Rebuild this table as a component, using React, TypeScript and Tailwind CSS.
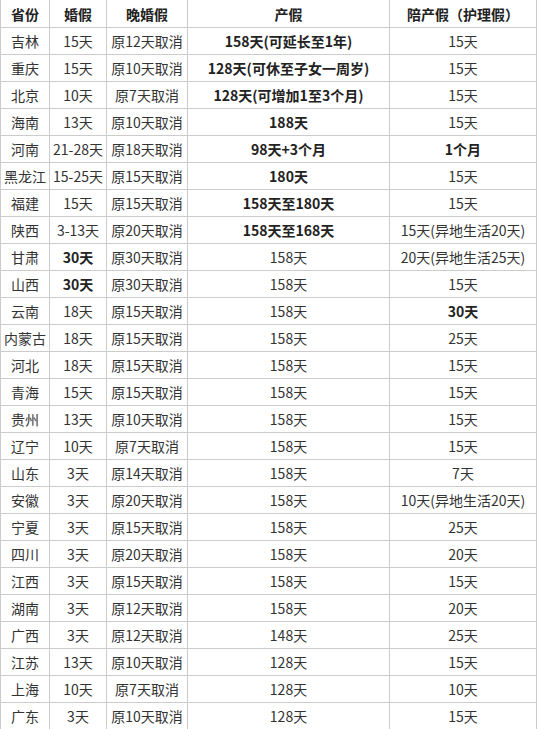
import React from 'react';

type Cell = string | { t: string; b: true };

const B = (t: string): Cell => ({ t, b: true });

const header = ['省份', '婚假', '晚婚假', '产假', '陪产假（护理假）'];

// province, marriage leave, late-marriage leave, maternity, paternity
const rows: Cell[][] = [
  ['吉林', '15天', '原12天取消', B('158天(可延长至1年)'), '15天'],
  ['重庆', '15天', '原10天取消', B('128天(可休至子女一周岁)'), '15天'],
  ['北京', '10天', '原7天取消', B('128天(可增加1至3个月)'), '15天'],
  ['海南', '13天', '原10天取消', B('188天'), '15天'],
  ['河南', '21-28天', '原18天取消', B('98天+3个月'), B('1个月')],
  ['黑龙江', '15-25天', '原15天取消', B('180天'), '15天'],
  ['福建', '15天', '原15天取消', B('158天至180天'), '15天'],
  ['陕西', '3-13天', '原20天取消', B('158天至168天'), '15天(异地生活20天)'],
  ['甘肃', B('30天'), '原30天取消', '158天', '20天(异地生活25天)'],
  ['山西', B('30天'), '原30天取消', '158天', '15天'],
  ['云南', '18天', '原15天取消', '158天', B('30天')],
  ['内蒙古', '18天', '原15天取消', '158天', '25天'],
  ['河北', '18天', '原15天取消', '158天', '15天'],
  ['青海', '15天', '原15天取消', '158天', '15天'],
  ['贵州', '13天', '原10天取消', '158天', '15天'],
  ['辽宁', '10天', '原7天取消', '158天', '15天'],
  ['山东', '3天', '原14天取消', '158天', '7天'],
  ['安徽', '3天', '原20天取消', '158天', '10天(异地生活20天)'],
  ['宁夏', '3天', '原15天取消', '158天', '25天'],
  ['四川', '3天', '原20天取消', '158天', '20天'],
  ['江西', '3天', '原15天取消', '158天', '15天'],
  ['湖南', '3天', '原12天取消', '158天', '20天'],
  ['广西', '3天', '原12天取消', '148天', '25天'],
  ['江苏', '13天', '原10天取消', '128天', '15天'],
  ['上海', '10天', '原7天取消', '128天', '10天'],
  ['广东', '3天', '原10天取消', '128天', '15天'],
];

function CellBox({ cell, first, head }: { cell: Cell; first: boolean; head?: boolean }) {
  const bold = head || typeof cell !== 'string';
  const text = typeof cell === 'string' ? cell : cell.t;
  return (
    <div
      className={`flex items-center justify-center border-r border-b border-[#cccccc] whitespace-nowrap leading-[20px] ${
        first ? 'border-l' : ''
      } ${head ? 'h-[28px]' : 'h-[27px]'} ${bold ? 'font-bold text-[#222]' : 'text-[#333]'}`}
    >
      {text}
    </div>
  );
}

export default function App() {
  return (
    <div
      className="w-[537px] h-[729px] overflow-hidden bg-white text-[14px]"
      style={{ fontFamily: '"Noto Sans CJK SC", "Noto Sans", sans-serif' }}
    >
      <div className="grid grid-cols-[50px_57px_81px_202px_147px]">
        {header.map((h, i) => (
          <CellBox key={`h-${i}`} cell={h} first={i === 0} head />
        ))}
        {rows.map((r, ri) =>
          r.map((c, ci) => <CellBox key={`${ri}-${ci}`} cell={c} first={ci === 0} />)
        )}
      </div>
    </div>
  );
}
